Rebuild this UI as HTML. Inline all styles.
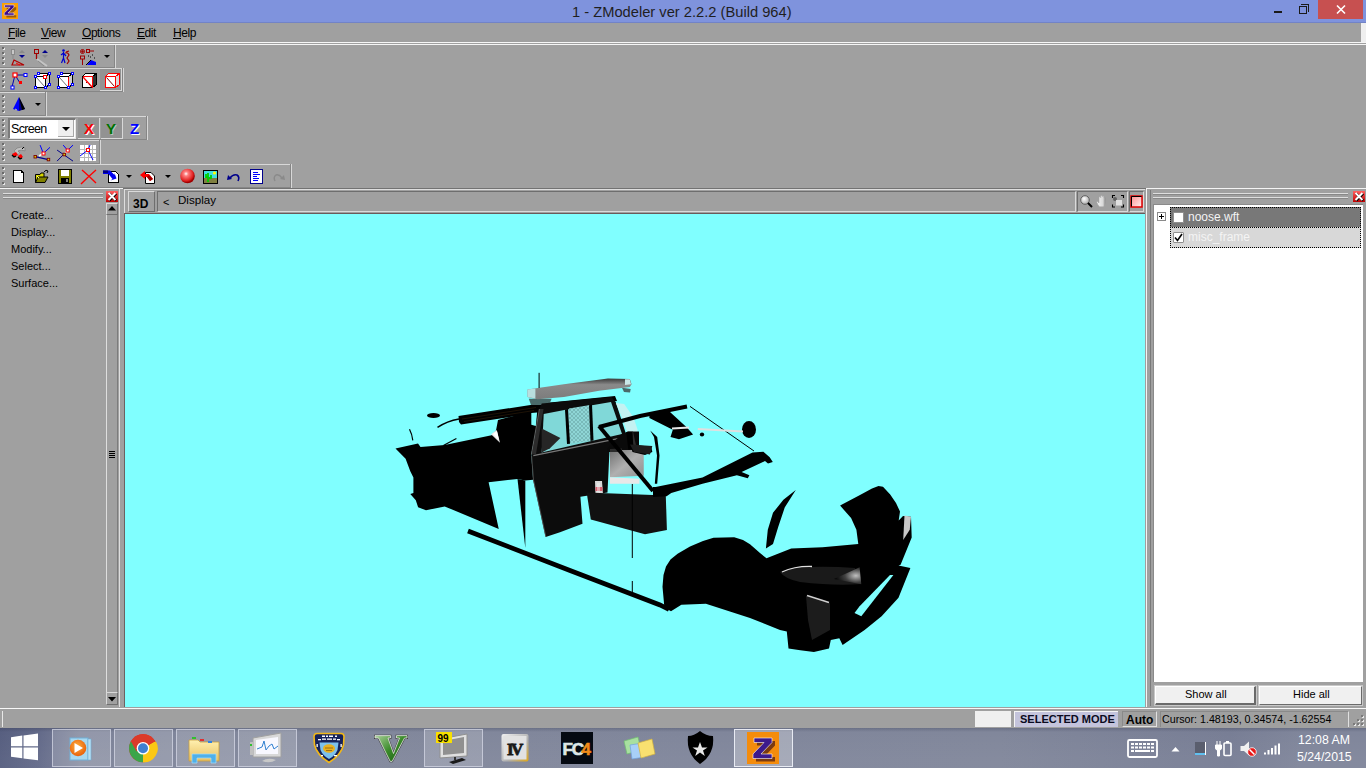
<!DOCTYPE html>
<html><head><meta charset="utf-8">
<style>
*{margin:0;padding:0;box-sizing:border-box}
html,body{width:1366px;height:768px;overflow:hidden;background:#a0a0a0;font-family:"Liberation Sans",sans-serif;font-size:11px;color:#000}
.a{position:absolute}
.t{position:absolute;white-space:nowrap;line-height:1}
svg{overflow:visible}
.lt{position:absolute;background:#dedede}
.dk{position:absolute;background:#6c6c6c}
.grip{position:absolute;left:2px;width:4px}
.grip i{display:block;width:2px;height:2px;background:#6a6a6a;box-shadow:1px 1px 0 #e8e8e8;margin-bottom:3px}
.u{border-bottom:1px solid #000;display:inline-block;line-height:9px}
.dd{position:absolute;width:0;height:0;border-left:3px solid transparent;border-right:3px solid transparent;border-top:3px solid #000}
</style></head><body>
<!-- title bar -->
<div class="a" style="left:0;top:0;width:1366px;height:22px;background:#7f93dd"></div>
<div class="a" style="left:0;top:22px;width:1366px;height:1px;background:#7283c6"></div>
<svg class="a" style="left:2px;top:3px" width="16" height="16" viewBox="0 0 16 16">
<rect width="16" height="16" fill="#fca000"/>
<path d="M2.5 2H12V4.2L6 10H12V12.2H2.2V10L8.2 4.2H2.5Z" fill="#7a4408" opacity="0.75" transform="translate(2.2,2.3)"/>
<path d="M2.5 2H12V4.2L6 10H12V12.2H2.2V10L8.2 4.2H2.5Z" fill="#3a0a8a" stroke="#d8c8e8" stroke-width="0.7"/>
</svg>
<div class="t" style="left:572px;top:5px;font-size:14.7px;color:#1f1f1f">1 - ZModeler ver 2.2.2 (Build 964)</div>
<div class="a" style="left:1274px;top:11px;width:8px;height:2px;background:#1a1a1a"></div>
<div class="a" style="left:1299px;top:6px;width:8px;height:8px;border:1.5px solid #1a1a1a"></div>
<div class="a" style="left:1301px;top:4px;width:8px;height:8px;border-top:1.5px solid #1a1a1a;border-right:1.5px solid #1a1a1a"></div>
<div class="a" style="left:1318px;top:0;width:45px;height:19px;background:#c75050"></div>
<svg class="a" style="left:1336px;top:5px" width="10" height="9" viewBox="0 0 10 9"><path d="M1 0.5L9 8.5M9 0.5L1 8.5" stroke="#fff" stroke-width="1.6"/></svg>
<!-- menu bar -->
<div class="t" style="left:8px;top:27px;font-size:12px;letter-spacing:-0.45px"><span class="u">F</span>ile</div>
<div class="t" style="left:41px;top:27px;font-size:12px;letter-spacing:-0.45px"><span class="u">V</span>iew</div>
<div class="t" style="left:82px;top:27px;font-size:12px;letter-spacing:-0.45px"><span class="u">O</span>ptions</div>
<div class="t" style="left:137px;top:27px;font-size:12px;letter-spacing:-0.45px"><span class="u">E</span>dit</div>
<div class="t" style="left:173px;top:27px;font-size:12px;letter-spacing:-0.45px"><span class="u">H</span>elp</div>
<div class="lt" style="left:1361px;top:23px;width:5px;height:19px;background:#efefef"></div>
<div class="lt" style="left:0;top:42px;width:1366px;height:1px;background:#f6f6f6"></div>
<div class="lt" style="left:0;top:44px;width:1366px;height:1px;background:#f6f6f6"></div>
<!-- toolbars -->
<div class="dk" style="left:0;top:67px;width:115px;height:1px;background:#868686"></div>
<div class="dk" style="left:114px;top:45px;width:1px;height:23px;background:#868686"></div>
<div class="lt" style="left:115px;top:45px;width:1px;height:23px;background:#d8d8d8"></div>
<div class="lt" style="left:0;top:68px;width:124px;height:1px;background:#d8d8d8"></div>
<div class="dk" style="left:0;top:91px;width:123px;height:1px;background:#868686"></div>
<div class="dk" style="left:122px;top:68px;width:1px;height:24px;background:#868686"></div>
<div class="lt" style="left:123px;top:68px;width:1px;height:24px;background:#d8d8d8"></div>
<div class="lt" style="left:0;top:92px;width:47px;height:1px;background:#d8d8d8"></div>
<div class="dk" style="left:0;top:115px;width:46px;height:1px;background:#868686"></div>
<div class="dk" style="left:45px;top:92px;width:1px;height:24px;background:#868686"></div>
<div class="lt" style="left:46px;top:92px;width:1px;height:24px;background:#d8d8d8"></div>
<div class="lt" style="left:0;top:116px;width:148px;height:1px;background:#d8d8d8"></div>
<div class="dk" style="left:0;top:139px;width:147px;height:1px;background:#868686"></div>
<div class="dk" style="left:146px;top:116px;width:1px;height:24px;background:#868686"></div>
<div class="lt" style="left:147px;top:116px;width:1px;height:24px;background:#d8d8d8"></div>
<div class="lt" style="left:0;top:140px;width:101px;height:1px;background:#d8d8d8"></div>
<div class="dk" style="left:0;top:163px;width:100px;height:1px;background:#868686"></div>
<div class="dk" style="left:99px;top:140px;width:1px;height:24px;background:#868686"></div>
<div class="lt" style="left:100px;top:140px;width:1px;height:24px;background:#d8d8d8"></div>
<div class="lt" style="left:0;top:164px;width:292px;height:1px;background:#d8d8d8"></div>
<div class="dk" style="left:0;top:187px;width:291px;height:1px;background:#868686"></div>
<div class="dk" style="left:290px;top:164px;width:1px;height:24px;background:#868686"></div>
<div class="lt" style="left:291px;top:164px;width:1px;height:24px;background:#d8d8d8"></div>
<!-- T1 -->
<div class="grip" style="top:47px"><i></i><i></i><i></i><i></i></div>
<!-- T2 -->
<div class="grip" style="top:70px"><i></i><i></i><i></i><i></i></div>
<div class="a" style="left:100px;top:69px;width:22px;height:22px;background:#929292;border-bottom:1px solid #d8d8d8;border-right:1px solid #d8d8d8"></div>
<!-- T3 -->
<div class="grip" style="top:95px"><i></i><i></i><i></i><i></i></div>
<!-- T4 -->
<div class="grip" style="top:119px"><i></i><i></i><i></i><i></i></div>
<!-- combo -->
<div class="a" style="left:8px;top:118px;width:68px;height:21px;background:#fff;border-top:2px solid #7a7a7a;border-left:2px solid #7a7a7a;border-right:1px solid #e8e8e8;border-bottom:1px solid #e8e8e8"></div>
<div class="a" style="left:58px;top:120px;width:16px;height:17px;background:#efefef;border-right:1px solid #a8a8a8;border-bottom:1px solid #a8a8a8"></div>
<div class="dd" style="left:62px;top:127px;border-left-width:4px;border-right-width:4px;border-top-width:4px"></div>
<div class="t" style="left:11px;top:123px;font-size:12.5px;letter-spacing:-0.7px;color:#000">Screen</div>
<div class="a" style="left:78px;top:118px;width:22px;height:21px;background:#929292;border-bottom:1px solid #d8d8d8;border-right:1px solid #d8d8d8"></div>
<div class="a" style="left:101px;top:118px;width:22px;height:21px;background:#929292;border-bottom:1px solid #d8d8d8;border-right:1px solid #d8d8d8"></div>
<div class="t" style="left:84px;top:120.5px;font-size:15px;font-weight:bold;color:#f00;text-shadow:1px 1px 0 #fff">X</div>
<div class="t" style="left:106px;top:120.5px;font-size:15px;font-weight:bold;color:#007000;text-shadow:1px 1px 0 #b8c8b8">Y</div>
<div class="t" style="left:130px;top:120.5px;font-size:15px;font-weight:bold;color:#0000ff;text-shadow:1px 1px 0 #fff">Z</div>
<!-- T5 -->
<div class="grip" style="top:143px"><i></i><i></i><i></i><i></i></div>
<!-- T6 -->
<div class="grip" style="top:167px"><i></i><i></i><i></i><i></i></div>
<div class="dd" style="left:104px;top:55px"></div>
<div class="dd" style="left:35px;top:103px"></div>
<div class="dd" style="left:126px;top:175px"></div>
<div class="dd" style="left:165px;top:175px"></div>

<svg class="a" style="left:0;top:0" width="300" height="190" viewBox="0 0 300 190">
<!-- T1 icon1: gray pin, red triangle, arrows -->
<g transform="translate(11,49)">
<rect x="0.5" y="0.5" width="3" height="5" fill="#c8c8c8" stroke="#8a8a8a"/><line x1="2" y1="6" x2="2" y2="10" stroke="#8a8a8a"/>
<path d="M6 1L9 4H3Z" fill="#8a8a8a" transform="translate(5,0)"/><path d="M3 6H9L6 9Z" fill="#00008b" transform="translate(5,0)"/>
<path d="M3 11L13 16H1Z" fill="none" stroke="#b00000" stroke-width="1.2"/><path d="M5 14L9 16" stroke="#f00"/>
</g>
<!-- T1 icon2 -->
<g transform="translate(34,49)">
<rect x="0.5" y="0.5" width="4" height="4" fill="none" stroke="#a00000"/><line x1="2.5" y1="5" x2="2.5" y2="10" stroke="#a00000" stroke-width="1.3"/>
<path d="M6 1L9 4H3Z" fill="#00008b" transform="translate(5,0)"/><path d="M3 6H9L6 9Z" fill="#8a8a8a" transform="translate(5,0)"/>
<path d="M3 10L13 17" stroke="#c4c4c4" stroke-width="2"/><path d="M4 12L10 17" stroke="#8a8a8a" stroke-width="1"/>
</g>
<!-- T1 icon3: figure -->
<g transform="translate(60,49)" stroke-width="1.2" fill="none">
<circle cx="3.5" cy="1.5" r="1.3" fill="#0000d0" stroke="none"/>
<path d="M3.5 3V9L1.5 14M3.5 9L5 14M1 6L3.5 4L6 7" stroke="#0000d0"/>
<path d="M5 4Q8 3 9 6L7 9L9 12L7 15M6 3L9 2" stroke="#a00000"/>
</g>
<!-- T1 icon4 -->
<g transform="translate(80,49)">
<circle cx="2.5" cy="2.5" r="2" fill="none" stroke="#a00000"/><path d="M1 2.5H4M2.5 1V4" stroke="#a00000" stroke-width="0.8"/>
<rect x="6.5" y="0.5" width="3" height="3" fill="none" stroke="#a00000"/><line x1="10" y1="2" x2="14" y2="2" stroke="#a00000"/>
<rect x="0.5" y="7" width="4" height="3" fill="none" stroke="#a00000"/><line x1="2.5" y1="10" x2="2.5" y2="16" stroke="#a00000"/>
<path d="M7 16L11 11L16 13V16Z" fill="#0000ff"/><path d="M6 16L11 11" stroke="#000"/>
<path d="M8 7h1M10 8h1M12 6h1M14 9h1" stroke="#000"/>
</g>
<!-- T2 icon1 -->
<g transform="translate(11,73)">
<path d="M4 2L14 2M4 2L1 14M4 2L9 10" stroke="#0000b0" stroke-width="1"/>
<rect x="2" y="0" width="4" height="4" fill="#fff" stroke="#f00" stroke-width="1.2"/>
<rect x="13" y="0.5" width="3" height="3" fill="#fff" stroke="#0000ff"/>
<rect x="8" y="8" width="3" height="3" fill="#f00"/>
<rect x="0" y="13" width="3" height="3" fill="#fff" stroke="#0000ff"/>
</g>
<!-- T2 cubes -->
<g transform="translate(34,73)" shape-rendering="crispEdges">
<path d="M1.5 3.5H11.5V14.5H1.5Z" fill="#fff" stroke="#000"/><path d="M1.5 3.5L4.5 0.5H15.5L11.5 3.5Z" fill="#fff" stroke="#000"/><path d="M11.5 3.5L15.5 0.5V11.5L11.5 14.5Z" fill="#d0d0d0" stroke="#000"/>
<path d="M2.5 4.5L10.5 13.5" stroke="#707070" shape-rendering="auto"/>
<g fill="#fff" stroke="#0000ff"><rect x="0.5" y="2.5" width="2" height="2"/><rect x="3.5" y="-0.5" width="2" height="2"/><rect x="14.5" y="-0.5" width="2" height="2"/><rect x="14.5" y="10.5" width="2" height="2"/><rect x="0.5" y="13.5" width="2" height="2"/><rect x="10.5" y="13.5" width="2" height="2"/></g><rect x="9.5" y="2.5" width="3" height="3" fill="#fff" stroke="#f00"/>
</g>
<g transform="translate(57,73)" shape-rendering="crispEdges">
<path d="M1.5 3.5H11.5V14.5H1.5Z" fill="#fff" stroke="#000"/><path d="M1.5 3.5L4.5 0.5H15.5L11.5 3.5Z" fill="#fff" stroke="#000"/><path d="M11.5 3.5L15.5 0.5V11.5L11.5 14.5Z" fill="#d0d0d0" stroke="#000"/>
<path d="M2.5 4.5L10.5 13.5" stroke="#707070" shape-rendering="auto"/><path d="M11.5 3.5V14.5" stroke="#f00" stroke-width="1.5"/>
<g fill="#fff" stroke="#0000ff"><rect x="0.5" y="2.5" width="2" height="2"/><rect x="3.5" y="-0.5" width="2" height="2"/><rect x="14.5" y="-0.5" width="2" height="2"/><rect x="14.5" y="10.5" width="2" height="2"/><rect x="0.5" y="13.5" width="2" height="2"/><rect x="10.5" y="13.5" width="2" height="2"/></g>
</g>
<g transform="translate(81,73)" shape-rendering="crispEdges">
<path d="M1.5 3.5H11.5V14.5H1.5Z" fill="#fff" stroke="#000" stroke-width="1.3"/><path d="M1.5 3.5L4.5 0.5H15.5L11.5 3.5Z" fill="#fff" stroke="#000"/><path d="M11.5 3.5L15.5 0.5V11.5L11.5 14.5Z" fill="#303030" stroke="#000"/>
<path d="M2 4L11 14" stroke="#f00" stroke-width="1.2" shape-rendering="auto"/><path d="M1.5 3.5H11.5V14.5" fill="none" stroke="#f00"/><path d="M5 9h1M8 11h1" stroke="#a00000"/>
</g>
<g transform="translate(104,73)" shape-rendering="crispEdges">
<path d="M1.5 3.5H11.5V14.5H1.5Z" fill="#fff" stroke="#f00" stroke-width="1.4"/><path d="M1.5 3.5L4.5 0.5H15.5L11.5 3.5Z" fill="#fff" stroke="#f00"/><path d="M11.5 3.5L15.5 0.5V11.5L11.5 14.5Z" fill="#d8d8d8" stroke="#f00"/>
<path d="M2.5 4.5L10.5 13.5" stroke="#800000" shape-rendering="auto"/>
</g>
<!-- T3 cone -->
<g transform="translate(13,97)">
<path d="M6 0L0 12L6 14Z" fill="#0000ff"/><path d="M6 0L12 12L6 14Z" fill="#00008b"/><path d="M6 0L9 13L12 12Z" fill="#000"/><path d="M2 12L4 13" stroke="#c0c0c0"/>
</g>
<!-- T5 icons -->
<g transform="translate(12,145)">
<path d="M3 9Q1 5 5 3Q10 1 13 3L13 6Q9 4 6 6L8 8" fill="#c0c0c0" stroke="#808080" stroke-width="0.8"/>
<path d="M0 9L4 7L6 10L2 12Z" fill="#f00"/><path d="M0 10L2 12L4 11" stroke="#000" stroke-width="1.3" fill="none"/>
<path d="M6 11L9 9L11 12L8 14Z" fill="#f00"/><path d="M6 12L8 14L10 13" stroke="#000" stroke-width="1.3" fill="none"/>
<path d="M10 4L12 2" stroke="#000"/>
</g>
<g>
<path d="M40.1 145.1L43.4 153.4M50 147.3L43.4 153.4" stroke="#0000ff" stroke-width="1"/>
<path d="M35.2 156.7L48.4 159.6" stroke="#00008b" stroke-width="1.2"/>
<path d="M39 156L43 153.5" stroke="#fff" stroke-width="1.6"/>
<rect x="42" y="152" width="3" height="3" fill="#fff" stroke="#f00" stroke-width="1"/>
<rect x="34" y="155.5" width="2.5" height="2.5" fill="#d0d000" stroke="#800000" stroke-width="0.9"/>
<rect x="47.2" y="158.3" width="2.5" height="2.5" fill="#d0d000" stroke="#800000" stroke-width="0.9"/>
<path d="M63.2 145.1L67.6 150.3M73 145.1L67.6 150.3" stroke="#0000ff" stroke-width="1"/>
<path d="M57.1 150.1L73 161.1M57.1 161.1L67.6 150.3" stroke="#00008b" stroke-width="1"/>
<path d="M65 153L68 151" stroke="#fff" stroke-width="1.6"/>
<rect x="66.2" y="149" width="3" height="3" fill="#fff" stroke="#f00" stroke-width="1"/>
<rect x="63" y="153.2" width="2.6" height="2.6" fill="#d0d000" stroke="#800000" stroke-width="0.9"/>
</g>
<g transform="translate(80,145)">
<rect x="0" y="0" width="16" height="16" fill="#fff"/>
<path d="M0 4.5H16M0 8.5H16M0 12.5H16M4.5 0V16M8.5 0V16M12.5 0V16" stroke="#b8b8b8" stroke-width="1" shape-rendering="crispEdges"/>
<path d="M8 5L10 0M8 5L0 11M8 5L13 15" stroke="#0000ff" stroke-width="1"/>
<rect x="6.5" y="3.5" width="3" height="3" fill="#fff" stroke="#f00"/>
</g>
<!-- T6 icons -->
<g shape-rendering="crispEdges">
<path d="M13.5 170.5H21.5L23.5 172.5V182.5H13.5Z" fill="#fff" stroke="#000"/><path d="M21.5 170.5V172.5H23.5" fill="none" stroke="#000"/>
</g>
<g transform="translate(35,169)">
<path d="M0.5 5.5H5L6 4H9V13.5H0.5Z" fill="#d8d800" stroke="#000"/><path d="M0.5 13.5L3 8H13L10 13.5Z" fill="#808000" stroke="#000"/>
<path d="M2 7L4 9" stroke="#ffff80"/><path d="M9 3Q11 0 13 2L12 4" fill="none" stroke="#000"/>
</g>
<g transform="translate(58,169)">
<rect x="0.5" y="0.5" width="13" height="14" fill="#808000" stroke="#000"/><rect x="3" y="1" width="8" height="6" fill="#fff"/><rect x="3" y="9" width="8" height="5" fill="#000"/><rect x="8" y="10" width="2" height="3" fill="#808080"/>
</g>
<g transform="translate(81,169)">
<path d="M1 1Q8 7 15 14M15 1Q8 7 0 15" stroke="#f00" stroke-width="1.4" fill="none"/>
</g>
<g>
<path d="M108.5 171.5H115.5L118.5 174.5V182.5H108.5Z" fill="#fff" stroke="#000" shape-rendering="crispEdges"/>
<path d="M103 170.5H110L114.5 175V173L116.5 178.5L110.5 180.5L112.5 179L108.5 174H103Z" fill="#0000f0"/>
<path d="M103 170.5H108V173H103Z" fill="#000080"/>
</g>
<g transform="translate(140,170)">
<path d="M5.5 2.5H11L14.5 6V13.5H5.5Z" fill="#fff" stroke="#000"/>
<path d="M0 5L5 1V4H9L13 9L10 11L7 7H5V9Z" fill="#f00"/><path d="M7 7L10 11L13 9L9 5Z" fill="#a00000"/>
</g>
</svg>
<svg class="a" style="left:0;top:0" width="300" height="190" viewBox="0 0 300 190">
<defs><radialGradient id="sph" cx="0.4" cy="0.35" r="0.6"><stop offset="0" stop-color="#fff"/><stop offset="0.25" stop-color="#ff8080"/><stop offset="0.8" stop-color="#e02020"/><stop offset="1" stop-color="#a00000"/></radialGradient></defs>
<circle cx="187.5" cy="176" r="7.3" fill="url(#sph)"/>
<g transform="translate(203,170)">
<rect x="0.5" y="0.5" width="14" height="13" fill="#c0c0c0" stroke="#000"/><rect x="1" y="1" width="13" height="7" fill="#40e0e0"/><rect x="1" y="8" width="13" height="5" fill="#808040"/>
<path d="M5 12V3M5 7H3V4M5 8H8V5" stroke="#00d000" stroke-width="1.8" fill="none"/><circle cx="11.5" cy="3" r="1.6" fill="#ff0"/>
</g>
<g transform="translate(227,173)">
<path d="M3 5Q6 1 10 2Q13 4 11 8" fill="none" stroke="#00008b" stroke-width="1.6"/><path d="M0 7L1 2L5 6Z" fill="#00008b"/>
</g>
<g transform="translate(250,169)">
<rect x="0.5" y="0.5" width="12" height="14" fill="#fff" stroke="#00008b"/><path d="M3 3.5H8M3 5.5H10M3 7.5H7M3 9.5H9M3 11.5H8" stroke="#0000ff"/>
</g>
<g transform="translate(273,173)">
<path d="M9 5Q6 1 3 2Q0 4 2 8" fill="none" stroke="#8a8a8a" stroke-width="1.4"/><path d="M12 7L11 2L7 6Z" fill="#8a8a8a"/>
</g>
</svg>
<!-- separator under toolbars -->
<div class="dk" style="left:123px;top:188px;width:1243px;height:1px;background:#727272"></div>
<!-- left panel -->
<div class="lt" style="left:0;top:188px;width:123px;height:1px;background:#f4f4f4"></div>
<div class="lt" style="left:3px;top:193px;width:100px;height:1px"></div>
<div class="dk" style="left:3px;top:194px;width:100px;height:1px;background:#888"></div>
<div class="lt" style="left:3px;top:197px;width:100px;height:1px"></div>
<div class="dk" style="left:3px;top:198px;width:100px;height:1px;background:#888"></div>
<svg class="a" style="left:106px;top:191px" width="12" height="11" viewBox="0 0 12 11">
<defs><linearGradient id="rb" x1="0" y1="0" x2="0" y2="1"><stop offset="0" stop-color="#ff6060"/><stop offset="1" stop-color="#c00000"/></linearGradient></defs>
<rect width="12" height="11" fill="url(#rb)"/><path d="M2.5 2L9.5 9M9.5 2L2.5 9" stroke="#000" stroke-width="2.6" transform="translate(0.6,0.6)"/><path d="M2.5 2L9.5 9M9.5 2L2.5 9" stroke="#fff" stroke-width="2"/>
</svg>
<!-- scrollbar -->
<div class="a" style="left:106px;top:203px;width:12px;height:12px;border-top:1px solid #d8d8d8;border-left:1px solid #d8d8d8;border-bottom:1px solid #707070;border-right:1px solid #707070"></div>
<svg class="a" style="left:108px;top:206px" width="8" height="5" viewBox="0 0 8 5"><path d="M4 0L8 4.5H0Z" fill="#000"/></svg>
<div class="lt" style="left:106px;top:215px;width:1px;height:477px"></div>
<div class="dk" style="left:117px;top:215px;width:1px;height:477px;background:#7c7c7c"></div>
<div class="a" style="left:109px;top:451px;width:6px;height:8px;background:repeating-linear-gradient(#000 0 1px,transparent 1px 2px)"></div>
<div class="a" style="left:106px;top:692px;width:12px;height:13px;border-top:1px solid #d8d8d8;border-left:1px solid #d8d8d8;border-bottom:1px solid #707070;border-right:1px solid #707070"></div>
<svg class="a" style="left:108px;top:697px" width="8" height="5" viewBox="0 0 8 5"><path d="M0 0H8L4 4.5Z" fill="#000"/></svg>
<div class="lt" style="left:119px;top:189px;width:1px;height:518px"></div>
<div class="dk" style="left:124px;top:213px;width:1px;height:494px;background:#6c6262"></div>
<div class="t" style="left:11px;top:210px">Create...</div>
<div class="t" style="left:11px;top:227px">Display...</div>
<div class="t" style="left:11px;top:244px">Modify...</div>
<div class="t" style="left:11px;top:261px">Select...</div>
<div class="t" style="left:11px;top:278px">Surface...</div>

<!-- viewport header -->
<div class="lt" style="left:125px;top:189px;width:1020px;height:1px"></div>
<div class="lt" style="left:124px;top:189px;width:1px;height:24px"></div>
<div class="a" style="left:128px;top:191px;width:27px;height:21px;border-top:1px solid #dadada;border-left:1px solid #dadada;border-right:1px solid #6e6e6e;border-bottom:1px solid #6e6e6e"></div>
<div class="t" style="left:133px;top:198px;font-size:12px;font-weight:bold">3D</div>
<div class="a" style="left:157px;top:191px;width:919px;height:21px;border-top:1px solid #6e6e6e;border-left:1px solid #6e6e6e;border-right:1px solid #dadada;border-bottom:1px solid #dadada"></div>
<div class="t" style="left:163px;top:197px;font-size:11px">&lt;</div>
<div class="t" style="left:178px;top:194px;font-size:11.6px">Display</div>
<div class="a" style="left:1077px;top:191px;width:51px;height:21px;border-top:1px solid #6e6e6e;border-left:1px solid #6e6e6e;border-right:1px solid #dadada;border-bottom:1px solid #dadada"></div>
<div class="a" style="left:1129px;top:191px;width:15px;height:21px;border-top:1px solid #6e6e6e;border-left:1px solid #6e6e6e;border-right:1px solid #dadada;border-bottom:1px solid #dadada"></div>
<div class="dk" style="left:125px;top:213px;width:1020px;height:1px;background:#6a5a5a"></div>
<svg class="a" style="left:1080px;top:195px" width="64" height="13" viewBox="0 0 64 13">
<defs><radialGradient id="lens" cx="0.4" cy="0.35" r="0.7"><stop offset="0" stop-color="#fff"/><stop offset="1" stop-color="#a8a8a8"/></radialGradient>
<linearGradient id="rsq" x1="0" y1="0" x2="1" y2="1"><stop offset="0" stop-color="#ff9090"/><stop offset="1" stop-color="#fff0f0"/></linearGradient></defs>
<circle cx="5" cy="5" r="4.3" fill="url(#lens)" stroke="#606060" stroke-width="1"/><path d="M8 8L12 12" stroke="#000" stroke-width="2"/>
<defs><linearGradient id="hand" x1="0" y1="0" x2="1" y2="0"><stop offset="0" stop-color="#f4f4f4"/><stop offset="0.7" stop-color="#d8d8d8"/><stop offset="1" stop-color="#808080"/></linearGradient></defs>
<path d="M19.5 11.8Q17.5 9.5 16.8 7.2Q16.6 6.2 17.6 6.5L19 8V2.6Q19 1.6 19.9 1.7Q20.6 1.8 20.7 2.7V1.2Q20.8 0.4 21.6 0.5Q22.4 0.6 22.4 1.4V1.6Q22.6 0.9 23.3 1Q24.1 1.1 24.1 2V3Q24.4 2.4 25 2.6Q25.7 2.8 25.6 3.6L25.3 8.6Q25 11 23.8 11.8Z" fill="url(#hand)" stroke="#a0a0a0" stroke-width="0.5"/>
<path d="M32.5 3V0.5H35M41 0.5H43.5V3M43.5 9.5V12H41M35 12H32.5V9.5" fill="none" stroke="#000" stroke-width="1.1"/><circle cx="35" cy="4" r="2" fill="#606060"/><rect x="36" y="5" width="6" height="5.5" fill="#e0e0e0"/>
<rect x="51" y="1" width="11" height="11" fill="url(#rsq)" stroke="#e00000" stroke-width="1.5"/><path d="M51.5 11.5V1.5H61.5" fill="none" stroke="#000" stroke-width="1"/>
</svg>

<!-- right panel -->
<div class="lt" style="left:1146px;top:188px;width:1px;height:519px;background:#f4f4f4"></div>
<div class="lt" style="left:1146px;top:188px;width:220px;height:1px;background:#f4f4f4"></div>
<div class="dk" style="left:1150px;top:190px;width:1px;height:516px;background:#7a7a7a"></div>
<div class="lt" style="left:1153px;top:193px;width:195px;height:1px"></div>
<div class="dk" style="left:1153px;top:194px;width:195px;height:1px;background:#888"></div>
<div class="lt" style="left:1153px;top:197px;width:195px;height:1px"></div>
<div class="dk" style="left:1153px;top:198px;width:195px;height:1px;background:#888"></div>
<svg class="a" style="left:1353px;top:191px" width="12" height="11" viewBox="0 0 12 11">
<rect width="12" height="11" fill="url(#rb)"/><path d="M2.5 2L9.5 9M9.5 2L2.5 9" stroke="#000" stroke-width="2.6" transform="translate(0.6,0.6)"/><path d="M2.5 2L9.5 9M9.5 2L2.5 9" stroke="#fff" stroke-width="2"/>
</svg>
<div class="a" style="left:1153px;top:204px;width:210px;height:478px;background:#fff;border-top:1px solid #8a8a8a;border-left:1px solid #8a8a8a"></div>
<div class="a" style="left:1170px;top:207px;width:191px;height:21px;background:#787878;border:1px dotted #000"></div>
<div class="a" style="left:1170px;top:227px;width:191px;height:21px;background:#d8d8d8;border:1px dotted #000"></div>
<div class="a" style="left:1157px;top:212px;width:9px;height:9px;border:1px solid #8a8a8a;background:#fff"></div>
<div class="a" style="left:1159px;top:216px;width:5px;height:1px;background:#000"></div>
<div class="a" style="left:1161px;top:214px;width:1px;height:5px;background:#000"></div>
<div class="a" style="left:1173px;top:212px;width:11px;height:11px;background:#fff;border:1px solid #909090;border-radius:1px"></div>
<div class="a" style="left:1173px;top:232px;width:11px;height:11px;background:#fff;border:1px solid #909090;border-radius:1px"></div>
<svg class="a" style="left:1174px;top:233px" width="9" height="9" viewBox="0 0 9 9"><path d="M1 4.5L3.5 7.5L8 1" stroke="#000" stroke-width="1.6" fill="none"/></svg>
<div class="t" style="left:1188px;top:211px;font-size:12px;color:#f4f4f4">noose.wft</div>
<div class="t" style="left:1188px;top:231px;font-size:12px;color:#f4f4f4">misc_frame</div>
<div class="a" style="left:1155px;top:686px;width:101px;height:19px;background:#f0f0f0;border-top:1px solid #fff;border-left:1px solid #fff;border-right:2px solid #6a6a6a;border-bottom:2px solid #6a6a6a;outline:1px solid #c8c8c8"></div>
<div class="a" style="left:1259px;top:686px;width:103px;height:19px;background:#f0f0f0;border-top:1px solid #fff;border-left:1px solid #fff;border-right:1px solid #6a6a6a;border-bottom:1px solid #6a6a6a;outline:1px solid #c8c8c8"></div>
<div class="t" style="left:1185px;top:689px;font-size:11px">Show all</div>
<div class="t" style="left:1293px;top:689px;font-size:11px">Hide all</div>
<div class="a" style="left:125px;top:214px;width:1020px;height:493px;background:#80ffff"></div>
<!-- car -->
<svg class="a" style="left:0;top:0" width="1366" height="768" viewBox="0 0 1366 768">
<defs><pattern id="mesh" width="4" height="4" patternUnits="userSpaceOnUse"><rect width="4" height="4" fill="#8fd6d6"/><path d="M0 0L4 4M4 0L0 4" stroke="#6aa8a8" stroke-width="0.6"/></pattern></defs>
<g fill="#000">
<!-- rear body -->
<polygon points="395.5,448.6 418,443.5 420.5,447 444.7,445 491.6,435.2 496,430.6 498,420 540,409 531.25,454.6 533.1,479.8 525.3,480.6 517.5,479 488.6,482.2 498.75,529 444.7,506.4 426,510.3 418.1,507.2 415.8,500.2 410.3,494 413.4,493.1 413.4,477.5 410.3,471.25 405.6,458.75"/>
<polygon points="517.5,479 525.3,480.6 525.3,547.8"/>
<!-- roof bar -->
<polygon points="458.5,416 540,403.5 615,396 617,401 540,412.5 461,424.5 459,422"/>
<path d="M462 419L536 407.5M464 421.5L534 410.5" stroke="#2a1a08" stroke-width="0.7"/>
<ellipse cx="433.5" cy="415.6" rx="6.5" ry="2.5"/>
<path d="M437.5 427.3Q447 421 459 418.9" stroke="#000" stroke-width="1.5" fill="none"/>
<path d="M409.5 429.3Q412 434 412.8 440.4" stroke="#000" stroke-width="1.2" fill="none"/>
<path d="M443.4 445.6L456.4 438.4" stroke="#000" stroke-width="1.2" fill="none"/>
</g>
<polygon points="531.3,413 537.1,412.4 535.8,426 531.3,424.7" fill="#80ffff"/>
<!-- light bar -->
<defs><linearGradient id="lbar" x1="0" y1="0" x2="0" y2="1"><stop offset="0" stop-color="#3a3a3a"/><stop offset="0.3" stop-color="#8a8a8a"/><stop offset="1" stop-color="#7c7c7c"/></linearGradient></defs>
<polygon points="528.8,398.8 551.6,398.8 549,405 531,405" fill="#4a6a6a"/>
<polygon points="622,387.8 630.7,389 630,392.6 624,392" fill="#4a6a6a"/>
<polygon points="527.5,389.5 563.9,384.3 607.9,378.5 629.8,379 631.6,384.3 629.8,386.9 599.1,390.8 563.9,397 537.6,399.2 527.5,397" fill="url(#lbar)"/>
<polygon points="527.5,389.5 535.4,388.6 535.4,398.4 527.5,397" fill="#b8dede"/>
<polygon points="625,379.3 629.8,379.2 631,384.3 625,385" fill="#c8e8e8"/>
<line x1="539.1" y1="372.8" x2="539.1" y2="388" stroke="#000" stroke-width="1"/>
<!-- door -->
<polygon points="539.6,408.75 541.7,403.5 611.4,397 615.8,402.3 626,434 609.6,448 607.5,492.5 580.4,496.7 582.5,523.75 560,532.2 545.6,536.9 533.1,479.8 531.25,454.6" fill="#0c0c0c"/>
<polygon points="539.6,409 543.5,409 536,454 532,454.6" fill="#2c2c2c"/>
<line x1="539.4" y1="409" x2="531.4" y2="454.5" stroke="#707070" stroke-width="0.8"/>
<polyline points="531.6,456 533.5,480 545.8,536.5" stroke="#585858" stroke-width="0.8" fill="none"/>
<polygon points="543.75,414 565.6,409.8 611,402 622,434 541.7,452.5" fill="#80d8d8"/>
<polygon points="569,408.5 590,405 592,440.5 569,443.5" fill="url(#mesh)"/>
<polygon points="565,409.5 568,409 570,443.8 567,444" fill="#000"/>
<polygon points="589,405.2 592,404.7 593.5,440.5 590.5,441" fill="#000"/>
<polygon points="541.7,428.5 560.4,437.9 550,448.3 541.7,452.5" fill="#262626"/>
<line x1="533.3" y1="455.6" x2="624.2" y2="437.3" stroke="#787878" stroke-width="1.3"/>
<polygon points="615.8,403 624.2,404 633.5,417.5 637.7,430 635.6,435.2 627.3,433 622,417.5" fill="#c4f2f2"/>
<!-- monitor -->
<polygon points="607,449 621,434.5 628,431.5 639,431.5 639,452 607,452" fill="#0a0a0a"/>
<polygon points="627.5,431.5 633,431.5 637,450 630,450" fill="#2e2e2e"/>
<defs><linearGradient id="mon" x1="0" y1="0" x2="1" y2="1"><stop offset="0" stop-color="#707070"/><stop offset="0.5" stop-color="#b0b0b0"/><stop offset="1" stop-color="#909090"/></linearGradient>
<radialGradient id="hl" cx="0.8" cy="0.5" r="0.8"><stop offset="0" stop-color="#c0c0c0"/><stop offset="0.5" stop-color="#404040"/><stop offset="1" stop-color="#000"/></radialGradient></defs>
<polygon points="610,450 643.75,450 643.75,475.8 610,477.3" fill="url(#mon)"/>
<polygon points="610,449 622,448.6 622,452 610,452" fill="#2a2a2a"/>
<polygon points="610,477.3 639.5,478.7 639.5,483.7 610,483.7" fill="#e8e8e8"/>
<polygon points="595,481 602,481 603,495 595.5,495" fill="#d8d8d8"/><rect x="595.5" y="487" width="7" height="4" fill="#d86070"/>
<polygon points="597,483 600,483 600,495 597,495" fill="#f0f0f0" opacity="0.5"/>
<!-- console -->
<polygon points="586.7,492.5 665.8,495.6 666.9,530 645,534.2 590.8,519.6" fill="#111"/>
<line x1="632.3" y1="484" x2="632.3" y2="558" stroke="#000" stroke-width="1"/>
<line x1="632.3" y1="581" x2="632.3" y2="592" stroke="#000" stroke-width="1"/>
<g fill="#000">
<!-- windshield -->
<polyline points="599,427 640,416 687,406.5" stroke="#000" stroke-width="4" fill="none"/>
<line x1="599" y1="426" x2="653" y2="491" stroke="#000" stroke-width="4"/>
<polygon points="649.4,413.4 668.1,410.3 686.9,427.5 693.1,434.5 679,439.2 670.5,436.9 672.8,429.8 649.4,418.1"/>
<line x1="690" y1="406.4" x2="754" y2="451" stroke="#000" stroke-width="1"/>
<ellipse cx="749" cy="429.5" rx="7" ry="8.5"/>
<polygon points="653,487 655.6,486.9 702.5,477.5 752.5,452.5 763.4,451.7 769.7,457.2 772.8,461.9 768,463.4 765,461 741.6,472 749.4,475.2 747.8,478.3 736.9,475.2 702.5,483.75 671.25,493.1 666.6,496.25 653,497"/>
<polygon points="650.2,430.6 657.2,436.9 659.5,455.6 657.2,483.75 654.8,483.75 657,455.6 654,436.9"/>
<polygon points="630.4,444.6 651.25,446.7 652.3,451.9 645,455 632.5,451.9"/>
<polygon points="626.25,432 632.5,432 633.5,449.8 628.3,449.8"/>
<!-- sill -->
<polyline points="468,531 570,570.5 660,605 669,609.5" stroke="#000" stroke-width="4.7" fill="none"/>
<!-- fender + front -->
<polygon points="750,544.3 760,553.1 766.5,558.3 791.25,548.6 822.5,547.3 858.3,544 856.4,529.7 851.1,518 840.1,505.6 860,495 872,488.5 878.5,486.1 883,486.7 890.2,494.5 896,503 900,511.5 898.7,520.6 903,516 911,516.7 911.7,537.5 900.6,564.8 898.5,565.5 910.4,568.1 898.5,597.7 881.6,616.3 864.6,629.9 842.6,645.1 839.3,638.3 830.8,640 829,648.5 813.9,651.9 800.3,650.2 788.5,648.5 786.8,631.6 780,629.9 750,617.9 705.9,603.7 681.4,604.7 671,611.3 664.4,607.5 662.5,586.7 663.5,575 666,566.5 670.5,559.5 677.6,553.7 690,546.5 703,541 713.5,537.7 734.2,537.3 743,540"/>
<polygon points="795.8,490 783.4,499.7 773,512.8 767.8,529.7 765.9,548.6 773,544 778.2,527.1 784.7,507.6"/>
</g>
<line x1="697.8" y1="429" x2="743" y2="431.4" stroke="#e0e0e0" stroke-width="2"/>
<path d="M672 428.5L689 427.5" stroke="#e8e8e8" stroke-width="2.2"/>
<ellipse cx="702" cy="434.5" rx="2.2" ry="2" fill="#000"/>
<polygon points="630,444.4 652.3,446 650,454.5 634,452" fill="#1e1e1e"/>
<polygon points="491,434.2 496.7,430 500,442.7" fill="#e8e8e8"/>
<polygon points="493,434 497,431 499,440" fill="#fff"/>
<path d="M780 572Q790 567 808 567Q830 566 855 568L861 584Q835 586 800 582Q785 579 780 572Z" fill="#1a1a1a"/>
<path d="M834 579L859.6 567.2L861.3 584.2Z" fill="url(#hl)"/>
<path d="M782 572Q795 566 812 566.5" stroke="#e0e0e0" stroke-width="1.3" fill="none"/>
<polygon points="806,596 830,603 830,630 812,640 808,620" fill="#1c1c1c"/>
<path d="M807 595.5L829 602.5" stroke="#d0d0d0" stroke-width="1.6" fill="none"/>

<polygon points="854.5,613 859.6,606.2 890,574.9 893.4,574.9 861.3,616.3" fill="#80ffff"/>
<polygon points="904.5,515.4 911,516.7 909.75,529.7 903.2,540.1" fill="#c8c8c8"/>

</svg><!-- status bar -->
<div class="lt" style="left:0;top:708px;width:1366px;height:1px;background:#f8f8f8"></div>
<div class="lt" style="left:2px;top:711px;width:1px;height:16px;background:#e8e8e8"></div>
<div class="a" style="left:975px;top:711px;width:36px;height:16px;background:#f0f0f0"></div>
<div class="a" style="left:1014px;top:711px;width:104px;height:16px;background:#c4c4dc;border-left:1px solid #f4f4f4;border-top:1px solid #f4f4f4"></div>
<div class="t" style="left:1020px;top:714px;font-size:11px;font-weight:bold;color:#0a0a20">SELECTED MODE</div>
<div class="a" style="left:1122px;top:711px;width:35px;height:16px;border-left:1px solid #8a8a8a;border-top:1px solid #8a8a8a;border-right:1px solid #e0e0e0;border-bottom:1px solid #e0e0e0"></div>
<div class="t" style="left:1126px;top:714px;font-size:12px;font-weight:bold">Auto</div>
<div class="a" style="left:1160px;top:711px;width:189px;height:16px;border-left:1px solid #8a8a8a;border-top:1px solid #8a8a8a;border-right:1px solid #e0e0e0"></div>
<div class="t" style="left:1162px;top:714px;font-size:10.7px">Cursor: 1.48193, 0.34574, -1.62554</div>
<svg class="a" style="left:1352px;top:714px" width="13" height="13" viewBox="0 0 13 13"><g fill="#e8e8e8"><rect x="10" y="2" width="2" height="2"/><rect x="6" y="6" width="2" height="2"/><rect x="10" y="6" width="2" height="2"/><rect x="2" y="10" width="2" height="2"/><rect x="6" y="10" width="2" height="2"/><rect x="10" y="10" width="2" height="2"/></g><g fill="#7a7a7a"><rect x="9" y="1" width="2" height="2"/><rect x="5" y="5" width="2" height="2"/><rect x="9" y="5" width="2" height="2"/><rect x="1" y="9" width="2" height="2"/><rect x="5" y="9" width="2" height="2"/><rect x="9" y="9" width="2" height="2"/></g></svg>
<!-- taskbar -->
<div class="a" style="left:0;top:728px;width:1366px;height:40px;background:linear-gradient(90deg,#575f80 0px,#646b8a 40px,#7d8399 80px,#82889c 300px,#80869b 700px,#81879b 1000px,#787e95 1230px,#80869b 1300px)"></div>
<div class="a" style="left:0;top:728px;width:1366px;height:40px;background:linear-gradient(180deg,rgba(40,45,70,.25) 0,rgba(0,0,0,0) 4px,rgba(255,255,255,0.03) 30px)"></div>
<div class="a" style="left:0;top:728px;width:1366px;height:40px;background:radial-gradient(ellipse 60px 14px at 300px 742px,rgba(255,255,255,.06),transparent),radial-gradient(ellipse 80px 16px at 860px 750px,rgba(255,255,255,.05),transparent),radial-gradient(ellipse 40px 20px at 1240px 745px,rgba(30,35,60,.12),transparent)"></div>
<!-- start logo -->
<svg class="a" style="left:11px;top:734px" width="28" height="27" viewBox="0 0 28 27">
<path d="M0 3.2L11.3 1.6V12.3H0Z" fill="#fff"/><path d="M12.5 1.4L27 -0.5V12.3H12.5Z" fill="#fff"/>
<path d="M0 13.5H11.3V24.3L0 22.7Z" fill="#fff"/><path d="M12.5 13.5H27V26.2L12.5 24.5Z" fill="#fff"/>
</svg>
<!-- framed buttons -->
<div class="a" style="left:52px;top:729px;width:59px;height:38px;border:1px solid rgba(215,218,232,.7);background:rgba(255,255,255,.17)"></div>
<div class="a" style="left:114px;top:729px;width:59px;height:38px;border:1px solid rgba(215,218,232,.7);background:rgba(255,255,255,.17)"></div>
<div class="a" style="left:176px;top:729px;width:59px;height:38px;border:1px solid rgba(215,218,232,.7);background:rgba(255,255,255,.17)"></div>
<div class="a" style="left:238px;top:729px;width:59px;height:38px;border:1px solid rgba(215,218,232,.7);background:rgba(255,255,255,.17)"></div>
<div class="a" style="left:424px;top:729px;width:59px;height:38px;border:1px solid rgba(215,218,232,.7);background:rgba(255,255,255,.17)"></div>
<div class="a" style="left:734px;top:729px;width:59px;height:38px;border:1px solid rgba(240,242,250,.9);background:rgba(255,255,255,.28)"></div>
<svg class="a" style="left:0;top:0" width="1366" height="768" viewBox="0 0 1366 768">
<defs>
<radialGradient id="orng" cx="0.45" cy="0.4" r="0.6"><stop offset="0" stop-color="#ffb040"/><stop offset="1" stop-color="#e8600a"/></radialGradient>
<linearGradient id="fold" x1="0" y1="0" x2="0" y2="1"><stop offset="0" stop-color="#fff0b0"/><stop offset="1" stop-color="#e8c060"/></linearGradient>
<linearGradient id="silv" x1="0" y1="0" x2="1" y2="1"><stop offset="0" stop-color="#f4f4f4"/><stop offset="1" stop-color="#a8a8a8"/></linearGradient>
</defs>
<!-- WMP -->
<rect x="70" y="738" width="18" height="22" fill="#a8d8f0" stroke="#70b0d8"/><rect x="88" y="739" width="3" height="21" fill="#b8e0f4" stroke="#70b0d8" stroke-width="0.6"/>
<circle cx="78" cy="748" r="8.3" fill="url(#orng)"/><path d="M74.5 743L83 748L74.5 753Z" fill="#fff"/>
<!-- chrome -->
<circle cx="143" cy="748.3" r="14" fill="#db3a2a"/>
<path d="M143 748.3L155.1 741.3A14 14 0 0 1 143 762.3Z" fill="#fbc813"/>
<path d="M143 748.3L143 762.3A14 14 0 0 1 130.9 741.3Z" fill="#3ba54a"/>
<path d="M143 748.3L130.9 741.3A14 14 0 0 1 155.1 741.3Z" fill="#db3a2a"/>
<path d="M143 741.8H155.6A14 14 0 0 0 131 741.5L136.5 751.5Z" fill="#db3a2a"/>
<path d="M149.5 748.3L143 762.3A14 14 0 0 0 156 741.5Z" fill="#fbc813"/>
<circle cx="143" cy="748.3" r="6.3" fill="#fff"/><circle cx="143" cy="748.3" r="5" fill="#3f7fd0"/>
<!-- explorer -->
<path d="M189 740H198L200 742H219V761H189Z" fill="url(#fold)" stroke="#c8a040" stroke-width="0.8"/>
<rect x="192" y="737" width="4" height="2" fill="#30c030"/><rect x="200" y="739" width="4" height="2" fill="#e03030"/><rect x="208" y="741" width="4" height="2" fill="#3080e0"/>
<path d="M192 763V754H216V763H211V758H197V763Z" fill="#50b0e8" stroke="#a0e0ff" stroke-width="0.7"/>
<!-- perfmon -->
<path d="M253 738L281 733V757L253 757Z" fill="#d8d8d8" stroke="#a0a0a0"/><path d="M256 740L278 737V754L256 754Z" fill="#f8f8ff"/>
<path d="M257 749L262 747L264 741L266 750L269 746L272 744L274 749L278 746" fill="none" stroke="#3080d0" stroke-width="1"/>
<path d="M262 761Q268 757 276 760Q270 764 262 761Z" fill="#c8c8c8"/><rect x="250" y="742" width="3" height="13" fill="#c0c0c0"/><rect x="250" y="744" width="2" height="2" fill="#30c030"/>
<!-- NYPD -->
<path d="M314 736.5Q314 733.5 317 733.5H341Q344 733.5 344 736.5L343.5 745Q341 755 329 762.5Q317 755 314.5 745Z" fill="#16225a" stroke="#f2b818" stroke-width="1.6"/>
<path d="M319.5 742.5H338.5L337.5 750Q335 756 329 759Q323 756 320.5 750Z" fill="#7cc0ec"/>
<ellipse cx="329" cy="748.5" rx="6" ry="4.2" fill="#e8b020"/><path d="M325 748h8M326 750.5h6" stroke="#8a6010" stroke-width="0.8"/>
<g fill="#fff"><rect x="322" y="735.5" width="3" height="1.5"/><rect x="326" y="735.5" width="2" height="1.5"/><rect x="329" y="735.5" width="4" height="1.5"/><rect x="335" y="735.5" width="2" height="1.5"/>
<rect x="318" y="739" width="3" height="1.3"/><rect x="322" y="738.5" width="4" height="1.3"/><rect x="327" y="738.5" width="5" height="1.3"/><rect x="333" y="738.5" width="3" height="1.3"/><rect x="337" y="739" width="3" height="1.3"/>
<rect x="316.5" y="744" width="1.3" height="3"/><rect x="340.5" y="744" width="1.3" height="3"/><rect x="321" y="755" width="2" height="1.3"/><rect x="334" y="755" width="3" height="1.3"/></g>
<!-- GTA V -->
<defs><linearGradient id="vgr" x1="0" y1="0" x2="1" y2="1"><stop offset="0" stop-color="#a8d098"/><stop offset="0.5" stop-color="#3a8a2a"/><stop offset="1" stop-color="#1c5a14"/></linearGradient></defs>
<path d="M375 735.6H390.5V738H388L393.5 753.5L399.5 738H396.5V735.6H407V738H404.5L392.2 761.4H390.2L378.5 738H375Z" fill="url(#vgr)" stroke="#3a3a3a" stroke-width="1.8"/>
<path d="M375 735.6H390.5V738H388L393.5 753.5L399.5 738H396.5V735.6H407V738H404.5L392.2 761.4H390.2L378.5 738H375Z" fill="url(#vgr)" stroke="#e8e8e8" stroke-width="0.8"/>
<!-- monitor 99 -->
<path d="M440 739L467 734V756L440 758Z" fill="#e0e0e0" stroke="#909090"/><path d="M443 741L464 737V753L443 755Z" fill="#909090"/>
<path d="M449 762L462 758L466 760L453 764Z" fill="#1a1a1a"/><path d="M455 757V760" stroke="#333" stroke-width="2"/>
<rect x="436" y="732" width="16" height="11" fill="#f8e000"/><text x="437.5" y="741.5" font-family="Liberation Sans" font-weight="bold" font-size="10" fill="#000">99</text>
<!-- IV -->
<defs><linearGradient id="ivb" x1="0" y1="0" x2="1" y2="1"><stop offset="0" stop-color="#f0f0f0"/><stop offset="0.6" stop-color="#b0b0b0"/><stop offset="1" stop-color="#e0a818"/></linearGradient></defs>
<rect x="501.5" y="734" width="27" height="27.5" rx="2" fill="url(#ivb)"/>
<rect x="503.5" y="736" width="23" height="23.5" fill="#e2e2e2"/>
<text x="507" y="754.5" font-family="Liberation Serif" font-weight="bold" font-size="17" fill="#1a1a1a" stroke="#1a1a1a" stroke-width="0.8" letter-spacing="-2.5">IV</text>
<!-- FC4 -->
<rect x="561" y="732" width="32" height="32" fill="#050a12"/>
<text x="562.5" y="755" font-family="Liberation Sans" font-weight="bold" font-size="17" fill="#dde6e6" stroke="#dde6e6" stroke-width="0.7" letter-spacing="-1.2">FC</text><text x="581.5" y="755" font-family="Liberation Sans" font-weight="bold" font-size="17" fill="#f08a18" stroke="#f08a18" stroke-width="0.5">4</text>
<!-- notes -->
<path d="M624 741L638 737L641 750L627 754Z" fill="#a8e0a0" stroke="#70c070" stroke-width="0.7"/>
<path d="M630 745L643 743L645 757L632 759Z" fill="#a8d0f8" stroke="#70a0e0" stroke-width="0.7"/>
<path d="M638 743L652 739L655 754L641 758Z" fill="#f8e070" stroke="#d0b040" stroke-width="0.7"/>
<!-- shield -->
<path d="M688 736Q694 736 700 731Q706 736 713 736Q715 754 700 764Q686 754 688 736Z" fill="#000"/>
<path d="M700 742L702 747.5H707.5L703 750.5L704.8 756L700 752.5L695.2 756L697 750.5L692.5 747.5H698Z" fill="#e8e8e8"/>
<!-- Z -->
<rect x="747" y="732" width="32" height="32" fill="#f48c0c"/>
<path d="M755 739H773V743.5L762 755H773V759.5H754V755L765 743.5H755Z" fill="#7a3a10" transform="translate(2,2)"/>
<path d="M754 738H772V742.5L761 754H772V758.5H753V754L764 742.5H754Z" fill="#3c1a8c" stroke="#fff" stroke-width="0.6"/>
<!-- tray -->
<rect x="1128" y="740" width="29" height="17" rx="1.5" fill="none" stroke="#fff" stroke-width="1.8"/>
<g fill="#fff"><rect x="1131" y="743" width="3" height="2"/><rect x="1135" y="743" width="3" height="2"/><rect x="1139" y="743" width="3" height="2"/><rect x="1143" y="743" width="3" height="2"/><rect x="1147" y="743" width="3" height="2"/><rect x="1151" y="743" width="3" height="2"/>
<rect x="1131" y="746.5" width="3" height="2"/><rect x="1135" y="746.5" width="3" height="2"/><rect x="1139" y="746.5" width="3" height="2"/><rect x="1143" y="746.5" width="3" height="2"/><rect x="1147" y="746.5" width="3" height="2"/><rect x="1151" y="746.5" width="3" height="2"/>
<rect x="1131" y="750" width="3" height="2"/><rect x="1135" y="750" width="15" height="2"/><rect x="1151" y="750" width="3" height="2"/></g>
<path d="M1171.5 751.5L1175.5 747L1179.5 751.5Z" fill="#fff"/>
<rect x="1195" y="742" width="10" height="11" fill="#5a5e6e"/><rect x="1195" y="753" width="10" height="2" fill="#60c0f0"/><rect x="1205" y="742" width="1" height="13" fill="#fff"/>
<path d="M1217 741V745M1220 741V745M1215.5 745H1221.5V748Q1221.5 750 1219.5 750V756H1217.5V750Q1215.5 750 1215.5 748Z" fill="#fff" stroke="#fff" stroke-width="1"/>
<rect x="1224" y="743" width="7" height="12.5" rx="1" fill="none" stroke="#fff" stroke-width="1.6"/><rect x="1226" y="741" width="3" height="2" fill="#fff"/>
<path d="M1240.5 746H1244L1249 741.5V755.5L1244 751H1240.5Z" fill="#f0f0f0"/>
<circle cx="1252" cy="752" r="4.3" fill="#e81818" stroke="#fff" stroke-width="0.8"/><path d="M1249.5 749.5L1254.5 754.5" stroke="#fff" stroke-width="1.5"/>
<g fill="#fff"><rect x="1264" y="752.5" width="2" height="2"/><rect x="1267.5" y="750" width="2" height="4.5"/><rect x="1271" y="748" width="2" height="6.5"/><rect x="1274.5" y="745.5" width="2" height="9"/><rect x="1278" y="743.5" width="2" height="11"/></g>
</svg>
<div class="t" style="left:1298px;top:734px;font-size:12.3px;color:#fff">12:08 AM</div>
<div class="t" style="left:1297px;top:751px;font-size:12.3px;color:#fff">5/24/2015</div>
</body></html>
